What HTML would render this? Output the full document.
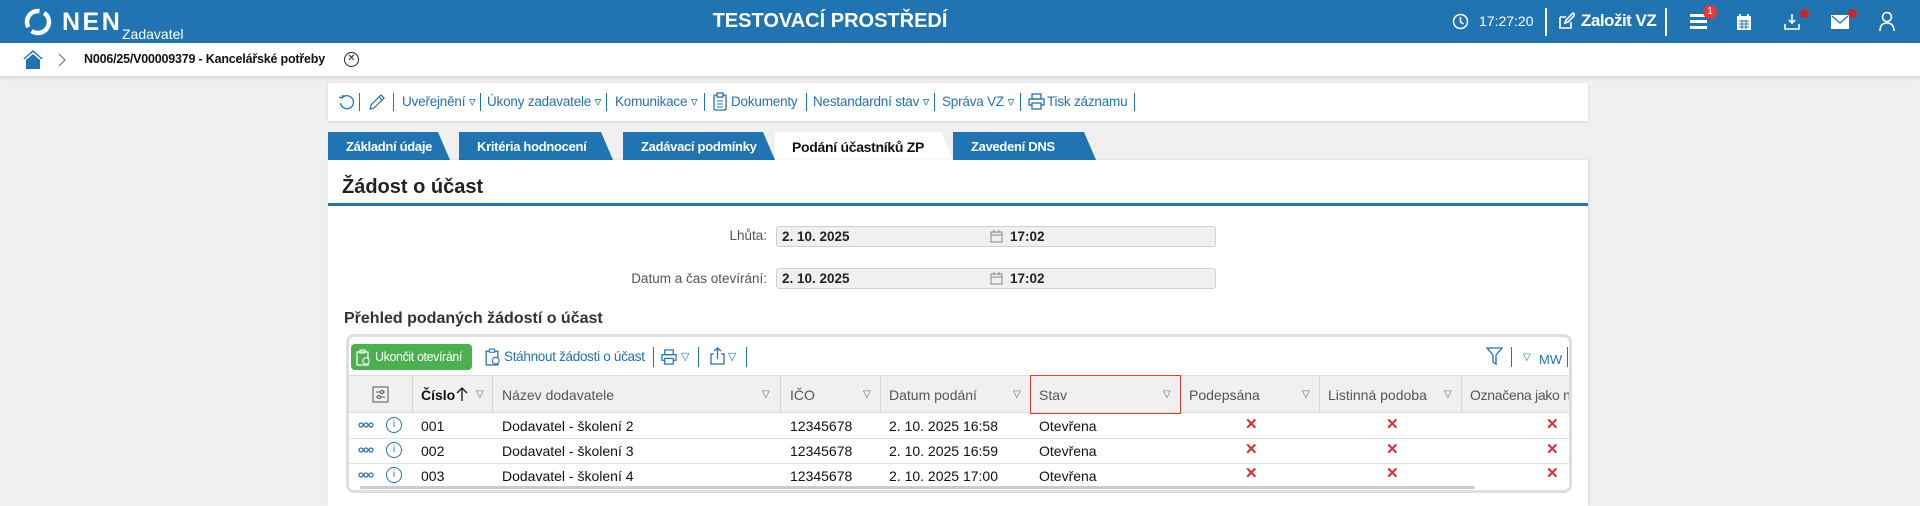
<!DOCTYPE html>
<html><head><meta charset="utf-8"><style>
*{margin:0;padding:0;box-sizing:border-box}
body{width:1920px;height:506px;overflow:hidden;background:#f0f0f0;font-family:"Liberation Sans",sans-serif;position:relative;color:#222}
.a{position:absolute;white-space:nowrap}
#hdr{position:absolute;left:0;top:0;width:1920px;height:43px;background:#1f74b1;color:#fff}
#bc{position:absolute;left:0;top:43px;width:1920px;height:33px;background:#fff;box-shadow:0 2px 4px rgba(0,0,0,.12)}
.sep{position:absolute;width:1px;background:#1f74b1}
.tb{font-size:13.5px;color:#1f74b1;top:94px;letter-spacing:-0.2px}
.tab{position:absolute;top:132px;height:28px;background:#1f74b1;color:#fff;font-weight:bold;font-size:13px;letter-spacing:-0.3px;line-height:30px;padding-left:18px;clip-path:polygon(0 0,calc(100% - 12px) 0,100% 100%,0 100%)}
.th{font-size:14px;color:#555;top:387px}
.dv{position:absolute;top:376px;height:37px;width:1px;background:#d6d6d6}
.tri{font-size:10px;color:#666;top:389px}
.rw{font-size:14px;color:#111}
.x{color:#d32f2f;font-weight:bold;font-size:15px}
</style></head><body>
<div id="hdr">
 <svg class="a" style="left:24px;top:8px" width="28" height="28" viewBox="0 0 28 28"><circle cx="14" cy="14" r="11" fill="none" stroke="#fff" stroke-width="4.5" stroke-dasharray="24 5"/></svg>
 <div class="a" style="left:62px;top:8px;font-size:25px;font-weight:bold;letter-spacing:2.5px">NEN</div>
 <div class="a" style="left:122px;top:26px;font-size:14px">Zadavatel</div>
 <div class="a" style="left:0;width:1660px;text-align:center;top:10px;font-size:20px;font-weight:bold">TESTOVACÍ PROSTŘEDÍ</div>
 <svg class="a" style="left:1452px;top:13px" width="17" height="17" viewBox="0 0 17 17"><circle cx="8.5" cy="8.5" r="7" fill="none" stroke="#fff" stroke-width="1.5"/><path d="M8.5 4v5l3 2" fill="none" stroke="#fff" stroke-width="1.5"/></svg>
 <div class="a" style="left:1479px;top:13px;font-size:14px">17:27:20</div>
 <div class="a" style="left:1545px;top:8px;width:2px;height:28px;background:#fff"></div>
 <svg class="a" style="left:1557px;top:12px" width="18" height="18" viewBox="0 0 18 18"><path d="M3 5h6M3 5v11h11v-6M8 11l1-3 7-7 2 2-7 7z" fill="none" stroke="#fff" stroke-width="1.6"/></svg>
 <div class="a" style="left:1581px;top:11px;font-size:17px;font-weight:bold;letter-spacing:-0.5px">Založit VZ</div>
 <div class="a" style="left:1665px;top:8px;width:2px;height:28px;background:#fff"></div>
 <div class="a" style="left:1690px;top:14px;width:17px;height:3px;background:#fff;box-shadow:0 6px 0 #fff,0 12px 0 #fff"></div>
 <div class="a" style="left:1703px;top:5px;width:14px;height:14px;border-radius:7px;background:#e53935;font-size:10px;text-align:center;line-height:14px">1</div>
 <svg class="a" style="left:1735px;top:13px" width="18" height="18" viewBox="0 0 18 18"><rect x="2" y="3" width="14" height="14" fill="#fff"/><path d="M5 1v4M13 1v4" stroke="#fff" stroke-width="2"/><path d="M4 8h10M4 11h10M4 14h10M7 7v9M11 7v9" stroke="#1f74b1" stroke-width="1"/></svg>
 <svg class="a" style="left:1783px;top:13px" width="18" height="18" viewBox="0 0 18 18"><path d="M9 1v9M6 7l3 3 3-3M2 11v5h14v-5" fill="none" stroke="#fff" stroke-width="1.6"/></svg>
 <div class="a" style="left:1800px;top:9px;width:9px;height:9px;border-radius:5px;background:#c62828"></div>
 <svg class="a" style="left:1831px;top:15px" width="18" height="14" viewBox="0 0 18 14"><rect x="0" y="0" width="18" height="14" fill="#fff"/><path d="M1 1l8 7 8-7" fill="none" stroke="#1f74b1" stroke-width="1.4"/></svg>
 <div class="a" style="left:1848px;top:9px;width:9px;height:9px;border-radius:5px;background:#c62828"></div>
 <svg class="a" style="left:1878px;top:11px" width="18" height="20" viewBox="0 0 18 20"><circle cx="9" cy="6" r="4.5" fill="none" stroke="#fff" stroke-width="1.6"/><path d="M2 20c0-6 3-8 7-8s7 2 7 8" fill="none" stroke="#fff" stroke-width="1.6"/></svg>
</div>
<div id="bc">
 <svg class="a" style="left:22px;top:6px" width="22" height="20" viewBox="0 0 22 20"><path d="M11 1L1 10h3v10h14V10h3z" fill="#1f74b1"/><path d="M4 10l7-6 7 6" fill="none" stroke="#fff" stroke-width="1.5"/></svg>
 <svg class="a" style="left:58px;top:10px" width="8" height="14" viewBox="0 0 8 14"><path d="M1 1l6 6-6 6" fill="none" stroke="#777" stroke-width="1.2"/></svg>
 <div class="a" style="left:84px;top:9px;font-size:12.5px;font-weight:bold;color:#111;letter-spacing:-0.2px">N006/25/V00009379 - Kancelářské potřeby</div>
 <div class="a" style="left:344px;top:9px;width:15px;height:15px;border:1.5px solid #222;border-radius:50%;font-size:10px;text-align:center;line-height:12px">✕</div>
</div>
<div class="a" style="left:328px;top:83px;width:1260px;height:38px;background:#fff;box-shadow:0 1px 3px rgba(0,0,0,.12)"></div>
<svg class="a" style="left:338px;top:94px" width="17" height="17" viewBox="0 0 17 17"><path d="M4 4a6.5 6.5 0 1 1-1.5 5" fill="none" stroke="#1f74b1" stroke-width="1.3"/><path d="M1 3l3 1 1-3" fill="none" stroke="#1f74b1" stroke-width="1.3"/></svg>
<div class="sep" style="left:359px;top:93px;height:18px"></div>
<svg class="a" style="left:368px;top:93px" width="17" height="18" viewBox="0 0 17 18"><path d="M2 16l1-4L13 2l3 3L6 15z M11 4l3 3" fill="none" stroke="#1f74b1" stroke-width="1.2"/></svg>
<div class="sep" style="left:393px;top:93px;height:18px"></div>
<div class="a tb" style="left:402px">Uveřejnění ▿</div>
<div class="sep" style="left:480px;top:93px;height:18px"></div>
<div class="a tb" style="left:487px">Úkony zadavatele ▿</div>
<div class="sep" style="left:606px;top:93px;height:18px"></div>
<div class="a tb" style="left:615px">Komunikace ▿</div>
<div class="sep" style="left:704px;top:93px;height:18px"></div>
<svg class="a" style="left:713px;top:92px" width="14" height="19" viewBox="0 0 14 19"><rect x="1" y="3" width="12" height="15" rx="1" fill="none" stroke="#1f74b1" stroke-width="1.3"/><rect x="4" y="1" width="6" height="4" fill="#fff" stroke="#1f74b1" stroke-width="1.3"/><path d="M4 9h6M4 12h6M4 15h6" stroke="#1f74b1"/></svg>
<div class="a tb" style="left:731px">Dokumenty</div>
<div class="sep" style="left:806px;top:93px;height:18px"></div>
<div class="a tb" style="left:813px">Nestandardní stav ▿</div>
<div class="sep" style="left:934px;top:93px;height:18px"></div>
<div class="a tb" style="left:942px">Správa VZ ▿</div>
<div class="sep" style="left:1020px;top:93px;height:18px"></div>
<svg class="a" style="left:1028px;top:93px" width="17" height="17" viewBox="0 0 17 17"><rect x="4" y="1" width="9" height="5" fill="none" stroke="#1f74b1" stroke-width="1.3"/><rect x="1" y="6" width="15" height="6" fill="none" stroke="#1f74b1" stroke-width="1.3"/><rect x="4" y="10" width="9" height="6" fill="#fff" stroke="#1f74b1" stroke-width="1.3"/></svg>
<div class="a tb" style="left:1047px">Tisk záznamu</div>
<div class="sep" style="left:1134px;top:93px;height:18px"></div>

<div class="tab" style="left:328px;width:122px">Základní údaje</div>
<div class="tab" style="left:459px;width:154px">Kritéria hodnocení</div>
<div class="tab" style="left:623px;width:152px">Zadávací podmínky</div>
<div class="a" style="left:775px;top:132px;width:178px;height:28px;background:#fff;clip-path:polygon(0 0,calc(100% - 12px) 0,100% 100%,0 100%);font-weight:bold;font-size:14px;letter-spacing:-0.3px;line-height:30px;padding-left:17px;color:#111">Podání účastníků ZP</div>
<div class="tab" style="left:953px;width:143px">Zavedení DNS</div>

<div class="a" style="left:328px;top:160px;width:1260px;height:346px;background:#fff;box-shadow:1px 0 3px rgba(0,0,0,.1)"></div>
<div class="a" style="left:342px;top:176px;font-size:20px;font-weight:bold;color:#222">Žádost o účast</div>
<div class="a" style="left:328px;top:203px;width:1260px;height:3px;background:#1f74b1"></div>

<div class="a" style="left:600px;width:167px;text-align:right;top:228px;font-size:13.5px;color:#555">Lhůta:</div>
<div class="a" style="left:776px;top:226px;width:440px;height:21px;background:#f0f0f0;border:1px solid #d0d0d0;border-radius:3px"></div>
<div class="a" style="left:782px;top:229px;font-size:13.5px;font-weight:bold">2. 10. 2025</div>
<svg class="a" style="left:990px;top:230px" width="13" height="13" viewBox="0 0 13 13"><rect x="1" y="2" width="11" height="10" fill="none" stroke="#888"/><path d="M1 5h11M4 0v3M9 0v3" stroke="#888"/></svg>
<div class="a" style="left:1010px;top:229px;font-size:13.5px;font-weight:bold">17:02</div>

<div class="a" style="left:560px;width:207px;text-align:right;top:271px;font-size:13.5px;color:#555">Datum a čas otevírání:</div>
<div class="a" style="left:776px;top:268px;width:440px;height:21px;background:#f0f0f0;border:1px solid #d0d0d0;border-radius:3px"></div>
<div class="a" style="left:782px;top:271px;font-size:13.5px;font-weight:bold">2. 10. 2025</div>
<svg class="a" style="left:990px;top:272px" width="13" height="13" viewBox="0 0 13 13"><rect x="1" y="2" width="11" height="10" fill="none" stroke="#888"/><path d="M1 5h11M4 0v3M9 0v3" stroke="#888"/></svg>
<div class="a" style="left:1010px;top:271px;font-size:13.5px;font-weight:bold">17:02</div>

<div class="a" style="left:344px;top:310px;font-size:16px;font-weight:bold;color:#333">Přehled podaných žádostí o účast</div>

<div class="a" style="left:346px;top:334px;width:1226px;height:159px;border:3px solid #dedede;border-radius:8px;background:#fff"></div>
<div class="a" style="left:351px;top:344px;width:121px;height:26px;background:#4caf50;border-radius:4px;color:#fff;font-size:12.5px;letter-spacing:-0.4px;line-height:26px;padding-left:24px">Ukončit otevírání</div>
<svg class="a" style="left:356px;top:349px" width="14" height="17" viewBox="0 0 14 17"><rect x="1" y="3" width="11" height="13" fill="none" stroke="#fff" stroke-width="1.2"/><rect x="4" y="1" width="5" height="3" fill="none" stroke="#fff"/><circle cx="10" cy="12" r="3.2" fill="#4caf50" stroke="#fff"/></svg>
<svg class="a" style="left:485px;top:348px" width="15" height="18" viewBox="0 0 14 17"><rect x="1" y="3" width="11" height="13" fill="none" stroke="#1f74b1" stroke-width="1.2"/><rect x="4" y="1" width="5" height="3" fill="#fff" stroke="#1f74b1"/><circle cx="10" cy="12" r="3.2" fill="#fff" stroke="#1f74b1"/></svg>
<div class="a" style="left:504px;top:349px;font-size:13.5px;letter-spacing:-0.3px;color:#1f74b1">Stáhnout žádosti o účast</div>
<div class="sep" style="left:653px;top:347px;height:20px"></div>
<svg class="a" style="left:661px;top:349px" width="16" height="16" viewBox="0 0 17 17"><rect x="4" y="1" width="9" height="5" fill="none" stroke="#1f74b1" stroke-width="1.3"/><rect x="1" y="6" width="15" height="6" fill="none" stroke="#1f74b1" stroke-width="1.3"/><rect x="4" y="10" width="9" height="6" fill="#fff" stroke="#1f74b1" stroke-width="1.3"/></svg>
<div class="a" style="left:681px;top:350px;font-size:11px;color:#1f74b1">▽</div>
<div class="sep" style="left:698px;top:347px;height:20px"></div>
<svg class="a" style="left:710px;top:347px" width="15" height="18" viewBox="0 0 15 18"><path d="M4 7H1v10h13V7h-3M7.5 12V1M4 4l3.5-3 3.5 3" fill="none" stroke="#1f74b1" stroke-width="1.3"/></svg>
<div class="a" style="left:728px;top:350px;font-size:11px;color:#1f74b1">▽</div>
<div class="sep" style="left:746px;top:347px;height:20px"></div>
<svg class="a" style="left:1486px;top:347px" width="17" height="18" viewBox="0 0 17 18"><path d="M1 1h15l-6 7v9l-3-2V8z" fill="none" stroke="#1f74b1" stroke-width="1.3"/></svg>
<div class="sep" style="left:1511px;top:347px;height:20px"></div>
<div class="a" style="left:1523px;top:352px;font-size:10px;color:#1f74b1">▽</div>
<div class="a" style="left:1539px;top:352px;font-size:13px;color:#1f74b1">MW</div>
<div class="sep" style="left:1567px;top:347px;height:20px"></div>

<div class="a" style="left:349px;top:375px;width:1220px;height:38px;background:#f0f0f0;border-top:1px solid #dcdcdc;border-bottom:1px solid #dcdcdc"></div>
<svg class="a" style="left:372px;top:386px" width="17" height="17" viewBox="0 0 17 17"><rect x="1" y="1" width="15" height="15" fill="none" stroke="#555"/><path d="M4 6h9M4 11h9" stroke="#555"/><circle cx="10" cy="6" r="1.5" fill="#fff" stroke="#555"/><circle cx="7" cy="11" r="1.5" fill="#fff" stroke="#555"/></svg>
<div class="dv" style="left:412px"></div><div class="dv" style="left:492px"></div><div class="dv" style="left:780px"></div><div class="dv" style="left:880px"></div><div class="dv" style="left:1180px"></div><div class="dv" style="left:1319px"></div><div class="dv" style="left:1461px"></div>
<div class="a" style="left:1030px;top:375px;width:151px;height:39px;border:1px solid #e53935"></div>
<div class="a th" style="left:421px;color:#111;font-weight:bold">Číslo</div>
<svg class="a" style="left:456px;top:386px" width="12" height="16" viewBox="0 0 12 16"><path d="M6 15V2M1 7l5-5 5 5" fill="none" stroke="#111" stroke-width="1.3"/></svg>
<div class="a tri" style="left:476px">▽</div>
<div class="a th" style="left:502px">Název dodavatele</div><div class="a tri" style="left:762px">▽</div>
<div class="a th" style="left:790px">IČO</div><div class="a tri" style="left:863px">▽</div>
<div class="a th" style="left:889px">Datum podání</div><div class="a tri" style="left:1013px">▽</div>
<div class="a th" style="left:1039px">Stav</div><div class="a tri" style="left:1163px">▽</div>
<div class="a th" style="left:1189px">Podepsána</div><div class="a tri" style="left:1302px">▽</div>
<div class="a th" style="left:1328px">Listinná podoba</div><div class="a tri" style="left:1444px">▽</div>
<div class="a th" style="left:1470px;width:99px;overflow:hidden;letter-spacing:-0.3px">Označena jako ne</div>

<div class="a" style="left:349px;top:438px;width:1220px;height:1px;background:#e2e2e2"></div>
<div class="a" style="left:349px;top:463px;width:1220px;height:1px;background:#e2e2e2"></div>
<div class="a" style="left:360px;top:486px;width:1115px;height:3px;background:#ccc;border-radius:2px"></div>

<svg class="a" style="left:358px;top:422px" width="16" height="6" viewBox="0 0 16 6"><circle cx="3" cy="3" r="2" fill="none" stroke="#1f74b1" stroke-width="1.2"/><circle cx="8" cy="3" r="2" fill="none" stroke="#1f74b1" stroke-width="1.2"/><circle cx="13" cy="3" r="2" fill="none" stroke="#1f74b1" stroke-width="1.2"/></svg>
<div class="a" style="left:386px;top:417px;width:16px;height:16px;border:1.4px solid #1f74b1;border-radius:50%;font-size:10px;color:#1f74b1;text-align:center;line-height:14px">i</div>
<div class="a rw" style="left:421px;top:418px">001</div><div class="a rw" style="left:502px;top:418px">Dodavatel - školení 2</div><div class="a rw" style="left:790px;top:418px">12345678</div><div class="a rw" style="left:889px;top:418px">2. 10. 2025 16:58</div><div class="a rw" style="left:1039px;top:418px">Otevřena</div>
<div class="a x" style="left:1245px;top:415px">✕</div><div class="a x" style="left:1386px;top:415px">✕</div><div class="a x" style="left:1546px;top:415px">✕</div>

<svg class="a" style="left:358px;top:447px" width="16" height="6" viewBox="0 0 16 6"><circle cx="3" cy="3" r="2" fill="none" stroke="#1f74b1" stroke-width="1.2"/><circle cx="8" cy="3" r="2" fill="none" stroke="#1f74b1" stroke-width="1.2"/><circle cx="13" cy="3" r="2" fill="none" stroke="#1f74b1" stroke-width="1.2"/></svg>
<div class="a" style="left:386px;top:442px;width:16px;height:16px;border:1.4px solid #1f74b1;border-radius:50%;font-size:10px;color:#1f74b1;text-align:center;line-height:14px">i</div>
<div class="a rw" style="left:421px;top:443px">002</div><div class="a rw" style="left:502px;top:443px">Dodavatel - školení 3</div><div class="a rw" style="left:790px;top:443px">12345678</div><div class="a rw" style="left:889px;top:443px">2. 10. 2025 16:59</div><div class="a rw" style="left:1039px;top:443px">Otevřena</div>
<div class="a x" style="left:1245px;top:440px">✕</div><div class="a x" style="left:1386px;top:440px">✕</div><div class="a x" style="left:1546px;top:440px">✕</div>

<svg class="a" style="left:358px;top:472px" width="16" height="6" viewBox="0 0 16 6"><circle cx="3" cy="3" r="2" fill="none" stroke="#1f74b1" stroke-width="1.2"/><circle cx="8" cy="3" r="2" fill="none" stroke="#1f74b1" stroke-width="1.2"/><circle cx="13" cy="3" r="2" fill="none" stroke="#1f74b1" stroke-width="1.2"/></svg>
<div class="a" style="left:386px;top:467px;width:16px;height:16px;border:1.4px solid #1f74b1;border-radius:50%;font-size:10px;color:#1f74b1;text-align:center;line-height:14px">i</div>
<div class="a rw" style="left:421px;top:468px">003</div><div class="a rw" style="left:502px;top:468px">Dodavatel - školení 4</div><div class="a rw" style="left:790px;top:468px">12345678</div><div class="a rw" style="left:889px;top:468px">2. 10. 2025 17:00</div><div class="a rw" style="left:1039px;top:468px">Otevřena</div>
<div class="a x" style="left:1245px;top:464px">✕</div><div class="a x" style="left:1386px;top:464px">✕</div><div class="a x" style="left:1546px;top:464px">✕</div>
</body></html>
